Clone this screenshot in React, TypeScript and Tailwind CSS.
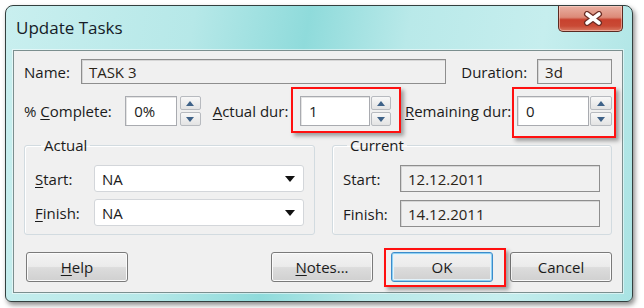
import React from 'react';

const font = { fontFamily: '"Segoe UI", "Open Sans", "Noto Sans", sans-serif' };

function U({ children }: { children: React.ReactNode }) {
  return <span className="underline underline-offset-[2px] decoration-1">{children}</span>;
}

function Arrow({ up }: { up?: boolean }) {
  return (
    <svg width="8" height="5" viewBox="0 0 8 5">
      <path d={up ? 'M0 5 L4 0 L8 5 Z' : 'M0 0 L8 0 L4 5 Z'} fill="#3f6288" />
    </svg>
  );
}

function Spinner({ className }: { className: string }) {
  const half =
    'flex-1 flex items-center justify-center rounded-[2px] border border-[#b7babf] bg-[linear-gradient(#f8f8f8,#e3e3e3)]';
  return (
    <div className={`flex flex-col gap-[2px] h-[30px] ${className}`}>
      <div className={half}>
        <Arrow up />
      </div>
      <div className={half}>
        <Arrow />
      </div>
    </div>
  );
}

function SpinField({ value, className }: { value: string; className: string }) {
  return (
    <div
      className={`h-[30px] bg-white border border-[#a9abb0] shadow-[inset_1px_1px_0_#e4e4e4] flex items-center pl-[8px] text-[#1b1b1b] ${className}`}
    >
      {value}
    </div>
  );
}

function ReadField({ value, className }: { value: string; className: string }) {
  return (
    <div
      className={`bg-[#f0f0f0] border border-[#8e8e8e] shadow-[inset_1px_1px_0_#d6d6d6] flex items-center pl-[7px] text-[#2a2418] ${className}`}
    >
      {value}
    </div>
  );
}

function Combo({ value }: { value: string }) {
  return (
    <div className="w-[210px] h-[27px] bg-white border border-[#d3d6da] rounded-[3px] flex items-center justify-between pl-[7px] pr-[8px] text-[#1b1b1b]">
      <span>{value}</span>
      <svg width="10" height="6" viewBox="0 0 10 6">
        <path d="M0 0 L10 0 L5 6 Z" fill="#111" />
      </svg>
    </div>
  );
}

function Btn({ children, def, className = '' }: { children: React.ReactNode; def?: boolean; className?: string }) {
  return (
    <div
      className={`w-[102px] h-[30px] rounded-[3px] border flex items-center justify-center text-[#1b1b1b] bg-[linear-gradient(#f3f3f3_0%,#ebebeb_48%,#dcdcdc_52%,#d0d0d0_100%)] ${
        def
          ? 'border-[#3c8ccb] shadow-[inset_0_0_0_1px_#8fd0f2,inset_0_0_0_2px_#e4f3fb]'
          : 'border-[#7a7a7a] shadow-[inset_0_0_0_1px_#fbfbfb]'
      } ${className}`}
    >
      {children}
    </div>
  );
}

function RedBox({ className }: { className: string }) {
  return (
    <div
      className={`absolute pointer-events-none border-2 border-[#ff1010] shadow-[3px_3px_4px_rgba(0,0,0,0.35)] ${className}`}
    />
  );
}

export default function App() {
  return (
    <div className="w-[644px] h-[308px] overflow-hidden bg-white pt-[5px] pl-[5px] text-[15px] leading-[20px]" style={font}>
      <div className="w-[628px] h-[297px] rounded-t-[8px] rounded-b-[6px] border border-[#33403f] shadow-[2px_3px_5px_rgba(0,0,0,0.45)] bg-[linear-gradient(100deg,#c9efef_0%,#b6e8e8_28%,#8fdbdb_45%,#b9e9e9_60%,#c6eeee_80%,#a9e3e3_100%)] flex flex-col">
        {/* title bar */}
        <div className="h-[44px] flex justify-between shrink-0">
          <div className="pl-[10px] pt-[11px] text-[17px] leading-[22px] text-[#161c28]">Update Tasks</div>
          <div className="mr-[9px] w-[65px] h-[26px] rounded-b-[5px] border border-t-0 border-[#5b2a22] bg-[linear-gradient(#e9b0a2_0%,#dc8a78_45%,#c8412e_55%,#c94a35_80%,#d97a63_100%)] shadow-[inset_0_0_0_1px_rgba(255,220,210,0.5)] flex items-center justify-center pl-[4px]">
            <svg width="20" height="15" viewBox="0 0 20 15">
              <path d="M4 3 L16 12 M16 3 L4 12" stroke="#6a2c24" strokeWidth="6" strokeLinecap="round" />
              <path d="M4 3 L16 12 M16 3 L4 12" stroke="#ffffff" strokeWidth="3.6" strokeLinecap="round" />
            </svg>
          </div>
        </div>

        {/* content panel */}
        <div className="ml-[7px] mr-[9px] mb-[8px] flex-1 bg-[#f0f0f0] border border-[#7b8f8f] shadow-[0_0_0_1px_rgba(255,255,255,0.5)] px-[10px] pt-[8px] pb-[10px] text-[#1b1b1b] flex flex-col">
          {/* row 1 */}
          <div className="flex items-center">
            <span className="w-[57px]">Name:</span>
            <ReadField value="TASK 3" className="w-[366px] h-[25px]" />
            <span className="ml-[15px] w-[76px]">Duration:</span>
            <ReadField value="3d" className="w-[75px] h-[25px]" />
          </div>

          {/* row 2 */}
          <div className="flex items-center mt-[12px]">
            <span className="w-[102px]">
              % <U>C</U>omplete:
            </span>
            <SpinField value="0%" className="w-[52px]" />
            <Spinner className="ml-[3px] w-[21px]" />
            <span className="ml-[12px] w-[88px]">
              <U>A</U>ctual dur:
            </span>
            <div className="relative flex">
              <SpinField value="1" className="w-[70px]" />
              <Spinner className="ml-[1px] w-[20px]" />
              <RedBox className="-left-[9px] -right-[10px] -top-[9px] -bottom-[7px]" />
            </div>
            <span className="ml-[14px] w-[113px]">
              <U>R</U>emaining dur:
            </span>
            <div className="relative flex">
              <SpinField value="0" className="w-[72px]" />
              <Spinner className="ml-[1px] w-[22px]" />
              <RedBox className="-left-[5px] -right-[4px] -top-[9px] -bottom-[12px]" />
            </div>
          </div>

          {/* groups */}
          <div className="flex mt-[9px]">
            <fieldset className="w-[291px] border border-[#d2dbe0] rounded-[3px] shadow-[inset_1px_1px_0_#fff] px-[10px] pt-[10px] pb-[7px] flex flex-col gap-[7px]">
              <legend className="ml-[6px] px-[3px]">Actual</legend>
              <div className="flex items-center">
                <span className="w-[59px]">
                  <U>S</U>tart:
                </span>
                <Combo value="NA" />
              </div>
              <div className="flex items-center">
                <span className="w-[59px]">
                  <U>F</U>inish:
                </span>
                <Combo value="NA" />
              </div>
            </fieldset>
            <fieldset className="ml-[17px] w-[281px] border border-[#d2dbe0] rounded-[3px] shadow-[inset_1px_1px_0_#fff] px-[10px] pt-[10px] pb-[7px] flex flex-col gap-[8px]">
              <legend className="ml-[4px] px-[3px]">Current</legend>
              <div className="flex items-center">
                <span className="w-[57px]">Start:</span>
                <ReadField value="12.12.2011" className="w-[200px] h-[27px]" />
              </div>
              <div className="flex items-center">
                <span className="w-[57px]">Finish:</span>
                <ReadField value="14.12.2011" className="w-[200px] h-[27px]" />
              </div>
            </fieldset>
          </div>

          {/* buttons */}
          <div className="flex mt-[17px]">
            <Btn className="ml-[2px]">
              <U>H</U>elp
            </Btn>
            <Btn className="ml-auto w-[101px]">
              <U>N</U>otes...
            </Btn>
            <div className="relative ml-[18px]">
              <Btn def>OK</Btn>
              <RedBox className="-left-[7px] -right-[13px] -top-[4px] -bottom-[5px]" />
            </div>
            <Btn className="ml-[17px]">Cancel</Btn>
          </div>
        </div>
      </div>
    </div>
  );
}
